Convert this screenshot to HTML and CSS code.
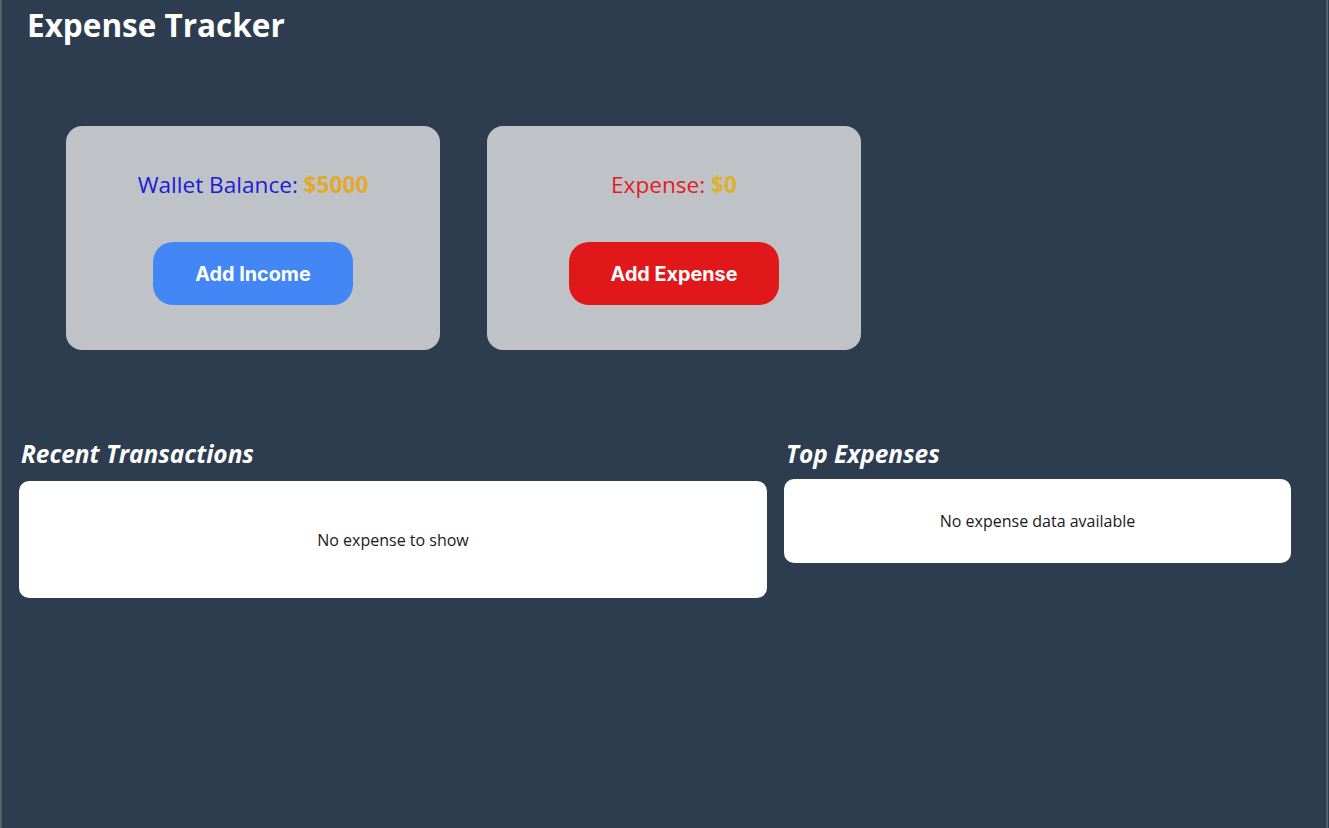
FILE: index.html
```html
<!DOCTYPE html>
<html lang="en">
<head>
<meta charset="utf-8">
<title>Expense Tracker</title>
<link rel="stylesheet" href="styles.css">
</head>
<body>
<div class="app">
  <h1 class="title">Expense Tracker</h1>
  <div class="cards">
    <div class="card">
      <p class="stat stat-wallet">Wallet Balance: <span class="amount">$5000</span></p>
      <button class="btn btn-income">Add Income</button>
    </div>
    <div class="card">
      <p class="stat stat-expense">Expense: <span class="amount">$0</span></p>
      <button class="btn btn-expense">Add Expense</button>
    </div>
  </div>
  <div class="sections">
    <section class="section">
      <h2 class="section-title">Recent Transactions</h2>
      <div class="panel panel-recent">No expense to show</div>
    </section>
    <section class="section">
      <h2 class="section-title">Top Expenses</h2>
      <div class="panel panel-top">No expense data available</div>
    </section>
  </div>
</div>
</body>
</html>
```

FILE: styles.css
```css
html, body {
  margin: 0;
  padding: 0;
  height: 100%;
}
body {
  background: #2e3c4f;
  font-family: "Open Sans", "Noto Sans", sans-serif;
}
.app {
  min-height: 828px;
  box-sizing: border-box;
  border-left: 2px solid #55606e;
  border-right: 2px solid #55606e;
  margin-right: 1px;
  padding: 0 0 0 17px;
}
.title {
  margin: 0;
  padding: 4px 0 0 8px;
  font-size: 31.5px;
  line-height: 42px;
  font-weight: 700;
  color: #ffffff;
}
.cards {
  display: flex;
  gap: 47px;
  padding: 80px 0 0 47px;
}
.card {
  width: 374px;
  height: 224px;
  box-sizing: border-box;
  background: #bfc3c8;
  border-radius: 16px;
  display: flex;
  flex-direction: column;
  align-items: center;
  padding-top: 44px;
}
.stat {
  margin: 0;
  font-size: 22.6px;
  line-height: 30px;
}
.stat-wallet { color: #1b1bd8; }
.stat-expense { color: #e41b23; }
.amount {
  color: #e2a92d;
  font-weight: 700;
}
.stat-expense .amount { color: #dcb22c; }
.btn {
  margin-top: 42px;
  height: 63px;
  border: none;
  border-radius: 20px;
  color: #ffffff;
  font-family: "Inter", "Roboto", sans-serif;
  font-weight: 700;
  font-size: 19.8px;
}
.btn-income {
  width: 200px;
  background: #4287f5;
}
.btn-expense {
  width: 210px;
  background: #e0181a;
}
.sections {
  display: grid;
  grid-template-columns: 748px 507px;
  gap: 17px;
  padding-top: 89px;
  align-items: start;
}
.section-title {
  margin: 0 0 12px 2px;
  font-size: 24.4px;
  line-height: 30px;
  font-style: italic;
  font-weight: 700;
  color: #ffffff;
  letter-spacing: 0;
}
.panel {
  background: #ffffff;
  border-radius: 10px;
  display: flex;
  align-items: center;
  justify-content: center;
  font-size: 16px;
  color: #1a1a1a;
}
.panel-recent {
  height: 117px;
}
.panel-top {
  height: 84px;
  margin-top: -2px;
}
```
